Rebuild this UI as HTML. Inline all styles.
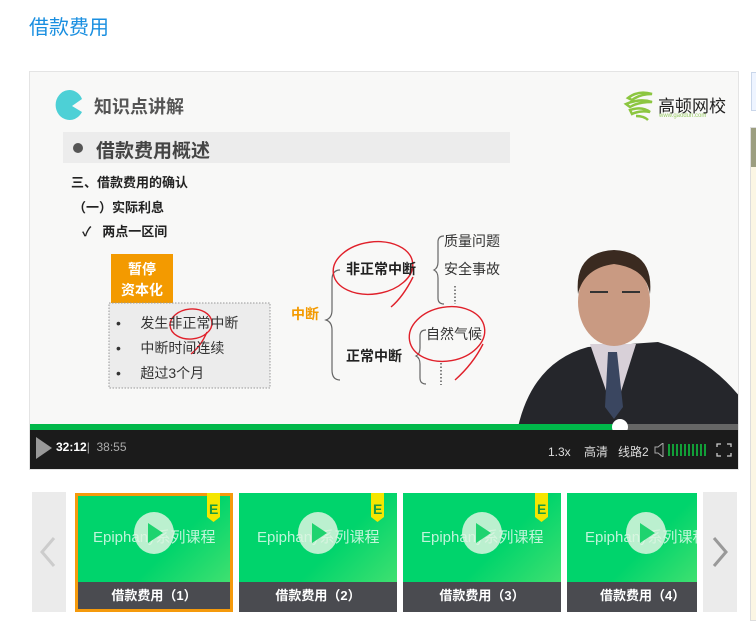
<!DOCTYPE html>
<html><head><meta charset="utf-8">
<style>
*{margin:0;padding:0;box-sizing:border-box}
body{width:756px;height:623px;background:#fff;position:relative;overflow:hidden;font-family:"Liberation Sans","Noto Sans CJK SC",sans-serif}
.a{position:absolute;white-space:nowrap}
.b{font-weight:bold}
</style></head><body>
<div class="a" style="left:29px;top:11px;font-size:20px;color:#1a8fe0">借款费用</div>

<!-- right panel -->
<div class="a" style="left:751px;top:72px;width:10px;height:39px;background:#eef4ff;border:1px solid #c9d6ea"></div>
<div class="a" style="left:750px;top:127px;width:10px;height:494px;background:#fbf6e4;border:1px solid #ddd"></div>
<div class="a" style="left:751px;top:128px;width:10px;height:39px;background:#9c9e80"></div>

<!-- video -->
<div class="a" style="left:29px;top:71px;width:710px;height:399px;background:#f8f8f7;border:1px solid #e4e4e4;overflow:hidden">
<svg class="a" style="left:0;top:0" width="710" height="399">
 <path d="M40 18 a14 15 0 1 0 12 22 l-10 -6 l10 -7 a14 15 0 0 0 -12 -9z" fill="#4dd0d6"/>
 <path d="M598 26 q10 -8 24 -4 q-12 0 -20 6z M596 32 q14 -6 26 -2 q-14 0 -22 5z M600 38 q12 -4 20 2 q-10 -2 -18 2z M606 44 q8 0 12 4" fill="none" stroke="#8cc640" stroke-width="2.5"/>
 <rect x="33" y="60" width="447" height="31" fill="#ececec"/>
 <circle cx="48" cy="76" r="5" fill="#555"/>
 <rect x="81" y="182" width="62" height="49" fill="#f39a00"/>
 <rect x="79" y="231" width="161" height="85" fill="#ececec" stroke="#999" stroke-dasharray="1.5 1.5"/>
 <path d="M310 198 q-8 0 -8 10 v30 q0 8 -6 10 q6 2 6 10 v40 q0 10 8 10" fill="none" stroke="#666" stroke-width="1.2"/>
 <path d="M414 164 q-6 0 -6 6 v20 q0 6 -4 8 q4 2 4 8 v20 q0 6 6 6" fill="none" stroke="#666" stroke-width="1.2"/>
 <path d="M396 258 q-6 0 -6 6 v12 q0 6 -4 8 q4 2 4 8 v14 q0 6 6 6" fill="none" stroke="#666" stroke-width="1.2"/>
 <path d="M425 214 v18 M411 291 v22" stroke="#333" stroke-dasharray="1.5 2" stroke-width="1.2"/>
 <g fill="none" stroke="#e0202a" stroke-width="1.4">
  <ellipse cx="343" cy="196" rx="40" ry="26" transform="rotate(-8 343 196)"/>
  <path d="M383 205 q-10 20 -22 30"/>
  <ellipse cx="417" cy="262" rx="38" ry="27" transform="rotate(-10 417 262)"/>
  <path d="M453 272 q-10 20 -28 36"/>
  <ellipse cx="161" cy="252" rx="21" ry="15" transform="rotate(-5 161 252)"/>
  <path d="M177 260 q-6 14 -16 22"/>
 </g>
 <!-- person -->
 <path d="M488 355 q15 -65 70 -80 l70 -5 q50 15 82 55 l0 80 l-222 0z" fill="#25262b"/>
 <path d="M560 272 l24 70 l22 -70z" fill="#d8d0d8"/>
 <path d="M578 280 l9 0 l6 55 l-9 12 l-9 -12z" fill="#3a4660"/>
 <ellipse cx="584" cy="230" rx="36" ry="44" fill="#c99a82"/>
 <path d="M548 222 q-4 -42 36 -44 q40 2 36 44 q-4 -26 -36 -30 q-30 4 -36 30z" fill="#3a2a20"/>
 <path d="M560 220 h18 M592 220 h18" stroke="#333" stroke-width="2"/>
</svg>
<div class="a b" style="left:64px;top:21px;font-size:18px;color:#555">知识点讲解</div>
<div class="a" style="left:628px;top:20px;font-size:17px;color:#222">高顿网校</div>
<div class="a" style="left:629px;top:41px;font-size:6px;color:#9c6">www.gaodun.com</div>
<div class="a b" style="left:66px;top:64px;font-size:19px;color:#444">借款费用概述</div>
<div class="a b" style="left:41px;top:100px;font-size:13px;color:#222">三、借款费用的确认</div>
<div class="a b" style="left:43px;top:125px;font-size:13px;color:#222">（一）实际利息</div>
<div class="a b" style="left:52px;top:149px;font-size:13px;color:#222">✓&nbsp;&nbsp;&nbsp;两点一区间</div>
<div class="a b" style="left:81px;top:187px;width:62px;text-align:center;font-size:14px;line-height:21px;color:#fff">暂停<br>资本化</div>
<div class="a" style="left:86px;top:239px;font-size:14px;line-height:25px;color:#333">•&nbsp;&nbsp;&nbsp;&nbsp;&nbsp;发生非正常中断<br>•&nbsp;&nbsp;&nbsp;&nbsp;&nbsp;中断时间连续<br>•&nbsp;&nbsp;&nbsp;&nbsp;&nbsp;超过3个月</div>
<div class="a b" style="left:261px;top:232px;font-size:14px;color:#f39a00">中断</div>
<div class="a b" style="left:316px;top:187px;font-size:14px;color:#222">非正常中断</div>
<div class="a b" style="left:316px;top:274px;font-size:14px;color:#222">正常中断</div>
<div class="a" style="left:414px;top:155px;font-size:14px;line-height:28px;color:#333">质量问题<br>安全事故</div>
<div class="a" style="left:396px;top:252px;font-size:14px;color:#333">自然气候</div>
<div class="a" style="left:0;top:352px;width:710px;height:6px;background:#666"></div>
<div class="a" style="left:0;top:352px;width:590px;height:6px;background:#00b84a"></div>
<div class="a" style="left:582px;top:347px;width:16px;height:16px;border-radius:50%;background:#fff"></div>
<div class="a" style="left:0;top:358px;width:710px;height:41px;background:#1b1b1b"></div>
<svg class="a" style="left:6px;top:365px" width="16" height="22"><path d="M0 0 L16 11 L0 22z" fill="#999"/></svg>
<div class="a" style="left:26px;top:368px;font-size:12px;color:#fff"><b>32:12</b><span style="color:#aaa">| &nbsp;38:55</span></div>
<div class="a" style="left:518px;top:371px;font-size:12px;color:#ddd">1.3x&nbsp;&nbsp;&nbsp; 高清&nbsp;&nbsp;&nbsp;线路2</div>
<svg class="a" style="left:624px;top:371px" width="90" height="14">
 <path d="M1 4 h3 l5 -4 v14 l-5 -4 h-3z" fill="none" stroke="#aaa"/>
 <g stroke="#10c040" stroke-width="1.6"><path d="M15 1v12M19 1v12M23 1v12M27 1v12M31 1v12M35 1v12M39 1v12M43 1v12M47 1v12M51 1v12"/></g>
 <path d="M63 4v-3h4M73 1h4v3M77 10v3h-4M67 13h-4v-3" fill="none" stroke="#ccc" stroke-width="1.3"/>
</svg>
</div>

<div class="a" style="left:32px;top:492px;width:34px;height:120px;background:#ebebeb"></div>
<svg class="a" style="left:38px;top:536px" width="20" height="32"><path d="M16 2 L4 16 L16 30" fill="none" stroke="#ccc" stroke-width="3"/></svg>
<div class="a" style="left:703px;top:492px;width:34px;height:120px;background:#ebebeb"></div>
<svg class="a" style="left:710px;top:536px" width="20" height="32"><path d="M4 2 L16 16 L4 30" fill="none" stroke="#999" stroke-width="3"/></svg>

<div class="a" style="left:75px;top:493px;width:158px;height:119px;border:3px solid #f59a0c;overflow:hidden">
 <div class="a" style="left:0;top:0;width:152px;height:86px;background:linear-gradient(135deg,#00d46c 60%,#3fe070)"></div>
 <div class="a" style="left:0;top:86px;width:152px;height:27px;background:#4a4b50;color:#fff;font-weight:bold;font-size:13px;text-align:center;line-height:28px">借款费用（1）</div>
</div>
<div class="a" style="left:239px;top:493px;width:158px;height:119px;overflow:hidden">
 <div class="a" style="left:0;top:0;width:158px;height:89px;background:linear-gradient(135deg,#00d46c 60%,#3fe070)"></div>
 <div class="a" style="left:0;top:89px;width:158px;height:30px;background:#4a4b50;color:#fff;font-weight:bold;font-size:13px;text-align:center;line-height:28px">借款费用（2）</div>
</div>
<div class="a" style="left:403px;top:493px;width:158px;height:119px;overflow:hidden">
 <div class="a" style="left:0;top:0;width:158px;height:89px;background:linear-gradient(135deg,#00d46c 60%,#3fe070)"></div>
 <div class="a" style="left:0;top:89px;width:158px;height:30px;background:#4a4b50;color:#fff;font-weight:bold;font-size:13px;text-align:center;line-height:28px">借款费用（3）</div>
</div>
<div class="a" style="left:567px;top:493px;width:130px;height:119px;overflow:hidden">
 <div class="a" style="left:0;top:0;width:130px;height:89px;background:linear-gradient(135deg,#00d46c 60%,#3fe070)"></div>
 <div class="a" style="left:0;top:89px;width:130px;height:30px;background:#4a4b50;color:#fff;font-weight:bold;font-size:13px;line-height:28px;padding-left:33px">借款费用（4）</div>
</div>

<div class="a" style="left:93px;top:526px;font-size:15px;color:rgba(255,255,255,.75)">Epiphany系列课程</div>
<div class="a" style="left:257px;top:526px;font-size:15px;color:rgba(255,255,255,.75)">Epiphany系列课程</div>
<div class="a" style="left:421px;top:526px;font-size:15px;color:rgba(255,255,255,.75)">Epiphany系列课程</div>
<div class="a" style="left:585px;top:526px;font-size:15px;color:rgba(255,255,255,.75);width:112px;overflow:hidden">Epiphany系列课程</div>
<svg class="a" style="left:0;top:490px" width="700" height="70">
 <g fill="rgba(220,245,225,.85)"><ellipse cx="154" cy="43" rx="20" ry="21"/><ellipse cx="318" cy="43" rx="20" ry="21"/><ellipse cx="482" cy="43" rx="20" ry="21"/><ellipse cx="646" cy="43" rx="20" ry="21"/></g>
 <g fill="#1ed36f"><path d="M148 33 l15 10 l-15 10z"/><path d="M312 33 l15 10 l-15 10z"/><path d="M476 33 l15 10 l-15 10z"/><path d="M640 33 l15 10 l-15 10z"/></g>
 <g fill="#f5e600"><path d="M207 3 h13 v24 l-6.5 5 l-6.5 -5z"/><path d="M371 3 h13 v24 l-6.5 5 l-6.5 -5z"/><path d="M535 3 h13 v24 l-6.5 5 l-6.5 -5z"/></g>
 <g fill="#1a9a40" font-family="Liberation Sans" font-weight="bold" font-size="14"><text x="209" y="24">E</text><text x="373" y="24">E</text><text x="537" y="24">E</text></g>
</svg>
</body></html>
